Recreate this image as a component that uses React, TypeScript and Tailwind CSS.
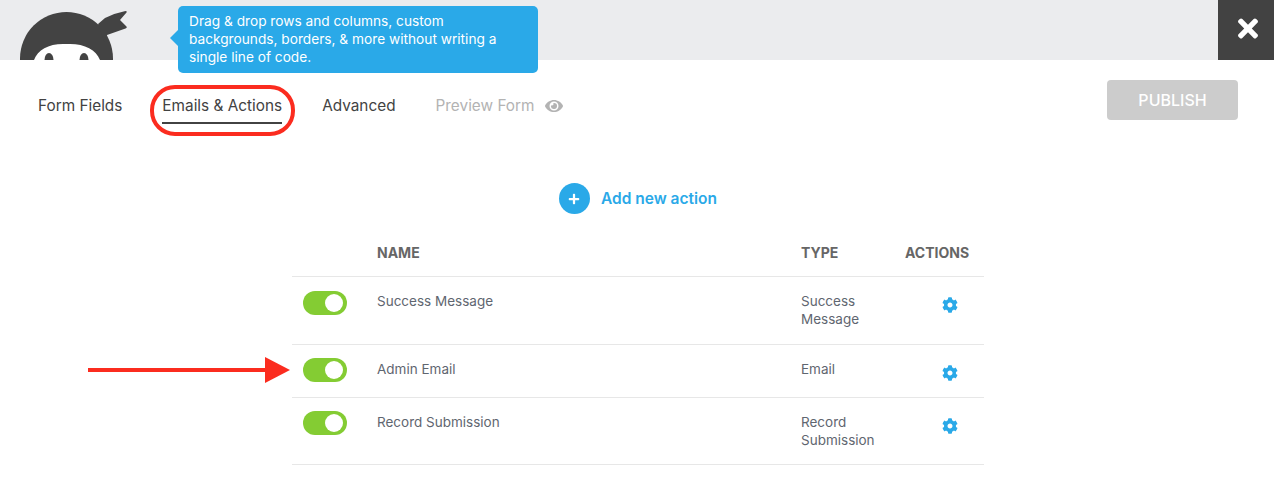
import { FaCog, FaEye, FaPlus, FaTimes } from 'react-icons/fa';

const actions = [
  { name: 'Success Message', type: 'Success Message' },
  { name: 'Admin Email', type: 'Email' },
  { name: 'Record Submission', type: 'Record Submission' },
];

function NinjaLogo() {
  return (
    <svg width="110" height="60" viewBox="0 0 110 60" className="ml-5 shrink-0">
      <circle cx="46.5" cy="58.5" r="46.5" fill="#434343" />
      <path
        d="M78 24 L85 18 Q95 13 105.5 11 Q107.5 11 106.5 12.5 L100 20 L106.5 26.5 Q107.5 28 105.5 28.5 L87 35 L84 42 Z"
        fill="#434343"
      />
      <path d="M14 60 C18 49 30 43 46.5 44 C63 43 76 49 80 60 Z" fill="#ffffff" />
      <ellipse cx="29" cy="60" rx="4.5" ry="7" fill="#434343" />
      <ellipse cx="64" cy="60" rx="4.5" ry="7" fill="#434343" />
    </svg>
  );
}

function Toggle() {
  return (
    <div className="flex h-6 w-11 items-center justify-end rounded-full bg-[#84cc33] pr-1">
      <div className="h-[18px] w-[18px] rounded-full bg-white" />
    </div>
  );
}

export default function App() {
  return (
    <div className="relative h-[496px] w-[1274px] overflow-hidden bg-white font-['Inter',sans-serif]">
      {/* Top bar */}
      <header className="flex h-[60px] items-start justify-between overflow-hidden bg-[#ebecee]">
        <NinjaLogo />
        <button className="flex h-[60px] w-14 items-center justify-center bg-[#424242] pb-[4px] pl-[4px] text-white">
          <FaTimes className="h-[29px] w-5" />
        </button>
      </header>

      {/* Tooltip */}
      <div className="absolute left-[178px] top-[6px] h-[67px] w-[360px] rounded-[5px] bg-[#2aa9e8] px-[11px] py-[6px] text-[13.7px] leading-[18px] text-white">
        <span className="absolute left-[-8px] top-[24px] h-0 w-0 border-y-[8px] border-r-[8px] border-y-transparent border-r-[#2aa9e8]" />
        Drag &amp; drop rows and columns, custom backgrounds, borders, &amp; more without writing a single line of code.
      </div>

      {/* Tabs */}
      <div className="flex items-start justify-between pl-[38px] pr-9 pt-5">
        <nav className="flex items-start gap-10 pt-[15px] text-[15.35px] leading-[22px] text-[#424242]">
          <a>Form Fields</a>
          <a className="border-b-2 border-[#424242] pb-[5px]">Emails &amp; Actions</a>
          <a>Advanced</a>
          <a className="flex items-center gap-[10px] text-[#b3b3b3]">
            Preview Form
            <FaEye className="h-4 w-[18px]" />
          </a>
        </nav>
        <button className="h-10 w-[131px] rounded-[4px] bg-[#cccccc] text-[16px] font-medium text-white">PUBLISH</button>
      </div>

      {/* Add new action */}
      <div className="mt-[59px] flex items-center justify-center gap-[11px] pl-[2px]">
        <span className="flex h-[31px] w-[31px] items-center justify-center rounded-full bg-[#2aa9e8] text-white">
          <FaPlus className="h-3 w-3" />
        </span>
        <span className="text-[15.5px] font-semibold text-[#2aa9e8]">Add new action</span>
      </div>

      {/* Actions table */}
      <div className="ml-[292px] mt-[30px] w-[692px]">
        <div className="grid h-[33.3px] grid-cols-[85px_424px_104px_79px] border-b border-[#e7e7e7] text-[14px] font-bold leading-[18px] text-[#666666]">
          <div />
          <div>NAME</div>
          <div>TYPE</div>
          <div>ACTIONS</div>
        </div>
        {actions.map((action) => (
          <div
            key={action.name}
            className="grid grid-cols-[85px_424px_104px_79px] border-b border-[#e7e7e7] pb-[14.75px] pt-[13.5px] text-[13.5px] leading-[18px] text-[#5f6670]"
          >
            <div className="pl-[11px]">
              <Toggle />
            </div>
            <div className="pt-[1.5px]">{action.name}</div>
            <div className="w-[90px] pb-[0.5px] pt-[1.5px]">{action.type}</div>
            <div className="flex justify-center pl-[10px] pt-[6.5px]">
              <FaCog className="h-4 w-4 text-[#2aa9e8]" />
            </div>
          </div>
        ))}
      </div>

      {/* Red annotations */}
      <div className="absolute left-[150px] top-[85px] h-[51px] w-[145px] rounded-[25px] border-[4px] border-[#fb2c1f]" />
      <svg className="absolute left-[88px] top-[356px]" width="204" height="28" viewBox="0 0 204 28">
        <rect x="0" y="12" width="180" height="4" fill="#fb2c1f" />
        <path d="M177 1 L202 14 L177 27 Z" fill="#fb2c1f" />
      </svg>
    </div>
  );
}
